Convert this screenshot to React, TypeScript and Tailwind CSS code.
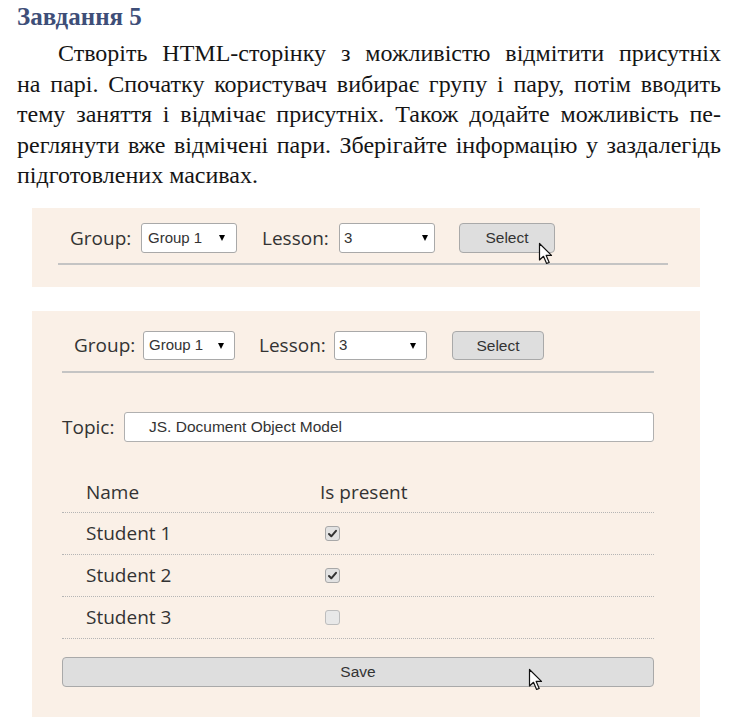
import React from "react";

const Cursor = ({ className }: { className: string }) => (
  <svg className={className} width="16" height="24" viewBox="0 0 16 24">
    <path
      d="M1.5 1.5 L1.5 18 L5.5 14.3 L8.6 21.5 L11.2 20.4 L8.2 13.4 L13.5 13.4 Z"
      fill="white"
      stroke="#111"
      strokeWidth="1.2"
      strokeLinejoin="round"
    />
  </svg>
);

const Tri = () => (
  <div className="w-0 h-0 border-l-[3.5px] border-r-[3.5px] border-t-[6px] border-l-transparent border-r-transparent border-t-black" />
);

const Check = ({ checked }: { checked: boolean }) => (
  <div
    className={
      checked
        ? "w-[15px] h-[15px] rounded-[3px] border border-[#a8a8a8] bg-[#e2e2e2] flex items-center justify-center"
        : "w-[15px] h-[15px] rounded-[3px] border border-[#bdbdbd] bg-[#e8e8e8]"
    }
  >
    {checked && (
      <svg width="11" height="11" viewBox="0 0 11 11">
        <path d="M2 6 L4.3 8.3 L9 2.8" fill="none" stroke="#333" strokeWidth="2" strokeLinecap="round" strokeLinejoin="round" />
      </svg>
    )}
  </div>
);

export default function App() {
  const label = "font-['Open_Sans',sans-serif] text-[19px] text-[#333] leading-none";
  const arial = "font-['Liberation_Sans',Arial,sans-serif] text-[#333]";
  const just = "text-justify [text-align-last:justify] whitespace-nowrap";
  return (
    <div className="w-[734px] h-[717px] bg-white overflow-hidden flex flex-col">
      <div className="h-[208px] shrink-0 font-['Liberation_Serif',serif]">
        <div className="pt-[2px] pl-[17px] text-[25px] leading-[30px] font-bold text-[#3e4e78]">Завдання 5</div>
        <div className="mt-[6px] ml-[17px] w-[704px] text-[24px] leading-[30.5px] text-[#151515]">
          <div className={`${just} pl-[41px]`}>
            Створіть HTML-сторінку з можливістю відмітити присутніх
          </div>
          <div className={just}>
            на парі. Спочатку користувач вибирає групу і пару, потім вводить
          </div>
          <div className={just}>
            тему заняття і відмічає присутніх. Також додайте можливість пе-
          </div>
          <div className={just}>
            реглянути вже відмічені пари. Зберігайте інформацію у заздалегідь
          </div>
          <div>підготовлених масивах.</div>
        </div>
      </div>

      {/* Panel 1 */}
      <div className="relative ml-[32px] w-[668px] h-[79px] shrink-0 bg-[#faf0e7]">
        <div className="flex items-center mt-[15px] pl-[38px] h-[30px]">
          <div className={`${label} w-[71px]`}>Group:</div>
          <div className="w-[96px] h-[30px] bg-white border border-[#a9a9a9] rounded-[3px] flex items-center justify-between pl-[6px] pr-[11px]">
            <span className={`${arial} text-[15px]`}>Group 1</span>
            <Tri />
          </div>
          <div className={`${label} ml-[25px] w-[77px]`}>Lesson:</div>
          <div className="w-[96px] h-[30px] bg-white border border-[#a9a9a9] rounded-[3px] flex items-center justify-between pl-[4px] pr-[6px]">
            <span className={`${arial} text-[15px]`}>3</span>
            <Tri />
          </div>
          <div className={`ml-[24px] w-[96px] h-[30px] bg-[#dedede] border border-[#a9a9a9] rounded-[4px] flex items-center justify-center ${arial} text-[15.5px]`}>
            Select
          </div>
        </div>
        <div className="mt-[10px] ml-[26px] w-[610px] h-[2px] bg-[#c4c4c4]" />
        <Cursor className="absolute left-[506px] top-[34px]" />
      </div>

      {/* Panel 2 */}
      <div className="relative ml-[32px] mt-[24px] w-[668px] flex-1 bg-[#faf0e7]">
        <div className="flex items-center mt-[20px] pl-[42px] h-[29px]">
          <div className={`${label} w-[69px]`}>Group:</div>
          <div className="w-[92px] h-[29px] bg-white border border-[#a9a9a9] rounded-[3px] flex items-center justify-between pl-[5px] pr-[10px]">
            <span className={`${arial} text-[15px]`}>Group 1</span>
            <Tri />
          </div>
          <div className={`${label} ml-[24px] w-[75px]`}>Lesson:</div>
          <div className="w-[93px] h-[29px] bg-white border border-[#a9a9a9] rounded-[3px] flex items-center justify-between pl-[4px] pr-[10px]">
            <span className={`${arial} text-[15px]`}>3</span>
            <Tri />
          </div>
          <div className={`ml-[25px] w-[92px] h-[29px] bg-[#dedede] border border-[#a9a9a9] rounded-[4px] flex items-center justify-center ${arial} text-[15.5px]`}>
            Select
          </div>
        </div>
        <div className="mt-[11px] ml-[30px] w-[592px] h-[2px] bg-[#c4c4c4]" />

        <div className="ml-[30px] w-[592px]">
          <div className="flex items-center mt-[39px] h-[30px]">
            <div className={`${label} w-[62px]`}>Topic:</div>
            <div className="flex-1 h-[30px] bg-white border border-[#b0b0b0] rounded-[3px] flex items-center pl-[24px]">
              <span className={`${arial} text-[15.5px]`}>JS. Document Object Model</span>
            </div>
          </div>

          <div className="mt-[30px] h-[41px] flex items-center border-b border-dotted border-[#b5b5b5]">
            <div className={`${label} w-[258px] pl-[24px]`}>Name</div>
            <div className={label}>Is present</div>
          </div>
          {[
            ["Student 1", true],
            ["Student 2", true],
            ["Student 3", false],
          ].map(([name, checked]) => (
            <div key={name as string} className="h-[42px] flex items-center border-b border-dotted border-[#b5b5b5]">
              <div className={`${label} w-[263px] pl-[24px]`}>{name as string}</div>
              <Check checked={checked as boolean} />
            </div>
          ))}

          <div className={`mt-[18px] h-[30px] bg-[#dedede] border border-[#a9a9a9] rounded-[4px] flex items-center justify-center ${arial} text-[15.5px]`}>
            Save
          </div>
        </div>
        <Cursor className="absolute left-[496px] top-[357px]" />
      </div>
    </div>
  );
}
